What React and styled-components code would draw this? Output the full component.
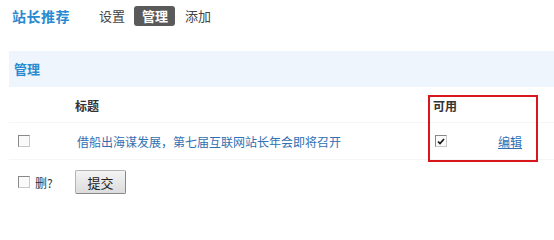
import React from "react";
import styled, { createGlobalStyle } from "styled-components";

const GlobalStyle = createGlobalStyle`
  html, body {
    margin: 0;
    padding: 0;
    background: #fff;
  }
  body {
    font-family: "Noto Sans CJK SC", "Liberation Sans", sans-serif;
    font-size: 12px;
    color: #333;
  }
`;

const tabs = [
  { label: "设置" },
  { label: "管理", active: true },
  { label: "添加" }
];

const rows = [
  { id: 1, title: "借船出海谋发展，第七届互联网站长年会即将召开", enabled: true }
];

const Box = ({ checked }) => (
  <CheckBox>
    {checked && (
      <svg width="8" height="7" viewBox="0 0 8 7">
        <path d="M1 3.5 L3 5.5 L7 1" stroke="#111" strokeWidth="1.6" fill="none" />
      </svg>
    )}
  </CheckBox>
);

const App = () => (
  <Page>
    <GlobalStyle />
    <Header>
      <Title>站长推荐</Title>
      <Tabs>
        {tabs.map(t => (
          <Tab key={t.label} $active={t.active}>
            {t.label}
          </Tab>
        ))}
      </Tabs>
    </Header>

    <Section>
      <Band>管理</Band>
      <Table>
        <HeadRow>
          <Cell />
          <HeadCell>标题</HeadCell>
          <HeadCell $pad={5}>可用</HeadCell>
          <Cell />
        </HeadRow>
        {rows.map(r => (
          <Row key={r.id}>
            <Cell $pad={9}>
              <Box />
            </Cell>
            <Cell $pad={2}>
              <TitleLink>{r.title}</TitleLink>
            </Cell>
            <Cell $pad={7}>
              <Box checked={r.enabled} />
            </Cell>
            <Cell $pad={10}>
              <EditLink>编辑</EditLink>
            </Cell>
          </Row>
        ))}
        <Footer>
          <Cell $pad={9}>
            <Box />
            <DelLabel>删?</DelLabel>
          </Cell>
          <Cell>
            <Submit>提交</Submit>
          </Cell>
        </Footer>
        <Mark />
      </Table>
    </Section>
  </Page>
);

const Page = styled.div`
  width: 554px;
  height: 214px;
  overflow: hidden;
`;

const Header = styled.div`
  display: flex;
  align-items: center;
  height: 32px;
  padding-left: 12px;
`;

const Title = styled.div`
  font-size: 14px;
  font-weight: bold;
  color: #2a8ad0;
  letter-spacing: 0.5px;
  margin-right: 21px;
`;

const Tabs = styled.div`
  display: flex;
  gap: 2px;
`;

const Tab = styled.div`
  height: 20px;
  line-height: 20px;
  padding: 0 7px 0 8px;
  border-radius: 3px;
  font-size: 13px;
  font-weight: ${p => (p.$active ? "bold" : "normal")};
  color: ${p => (p.$active ? "#fff" : "#444")};
  background: ${p => (p.$active ? "#5a5a5a" : "transparent")};
`;

const Section = styled.div`
  margin: 19px 0 0 9px;
`;

const Band = styled.div`
  height: 36px;
  line-height: 36px;
  padding-left: 5px;
  background: #eff5fc;
  color: #2a8ad0;
  font-size: 13px;
  font-weight: bold;
`;

const Table = styled.div`
  position: relative;
`;

const Grid = styled.div`
  display: grid;
  grid-template-columns: 66px 353px 60px 1fr;
  align-items: center;
`;

const HeadRow = styled(Grid)`
  height: 35px;
  border-bottom: 1px solid #f5f5f5;
`;

const Row = styled(Grid)`
  height: 36px;
  border-bottom: 1px solid #f5f5f5;
`;

const Footer = styled(Grid)`
  height: 44px;
  grid-template-columns: 66px 1fr;
`;

const Cell = styled.div`
  display: flex;
  align-items: center;
  padding-left: ${p => p.$pad || 0}px;
`;

const HeadCell = styled(Cell)`
  font-weight: bold;
  color: #333;
  padding-top: 1px;
`;

const CheckBox = styled.span`
  display: inline-flex;
  align-items: center;
  justify-content: center;
  box-sizing: border-box;
  width: 12px;
  height: 12px;
  border: 1px solid #c8c8c8;
  border-top-color: #888;
  border-left-color: #888;
  background: #fafafa;
`;

const TitleLink = styled.span`
  color: #3070b3;
  font-size: 12px;
`;

const EditLink = styled.span`
  color: #3070b3;
  text-decoration: underline;
  font-size: 12px;
`;

const DelLabel = styled.span`
  margin-left: 5px;
  color: #333;
`;

const Submit = styled.button`
  width: 51px;
  height: 24px;
  padding: 0;
  font-family: inherit;
  font-size: 13px;
  color: #222;
  border: 1px solid #b4b4b4;
  border-right-color: #888;
  border-bottom-color: #888;
  background: linear-gradient(#f4f4f4, #dcdcdc);
  border-radius: 2px;
`;

const Mark = styled.div`
  position: absolute;
  left: 419px;
  top: 8px;
  width: 110px;
  height: 67px;
  box-sizing: border-box;
  border: 2px solid #d9161c;
  pointer-events: none;
`;

export default App;
